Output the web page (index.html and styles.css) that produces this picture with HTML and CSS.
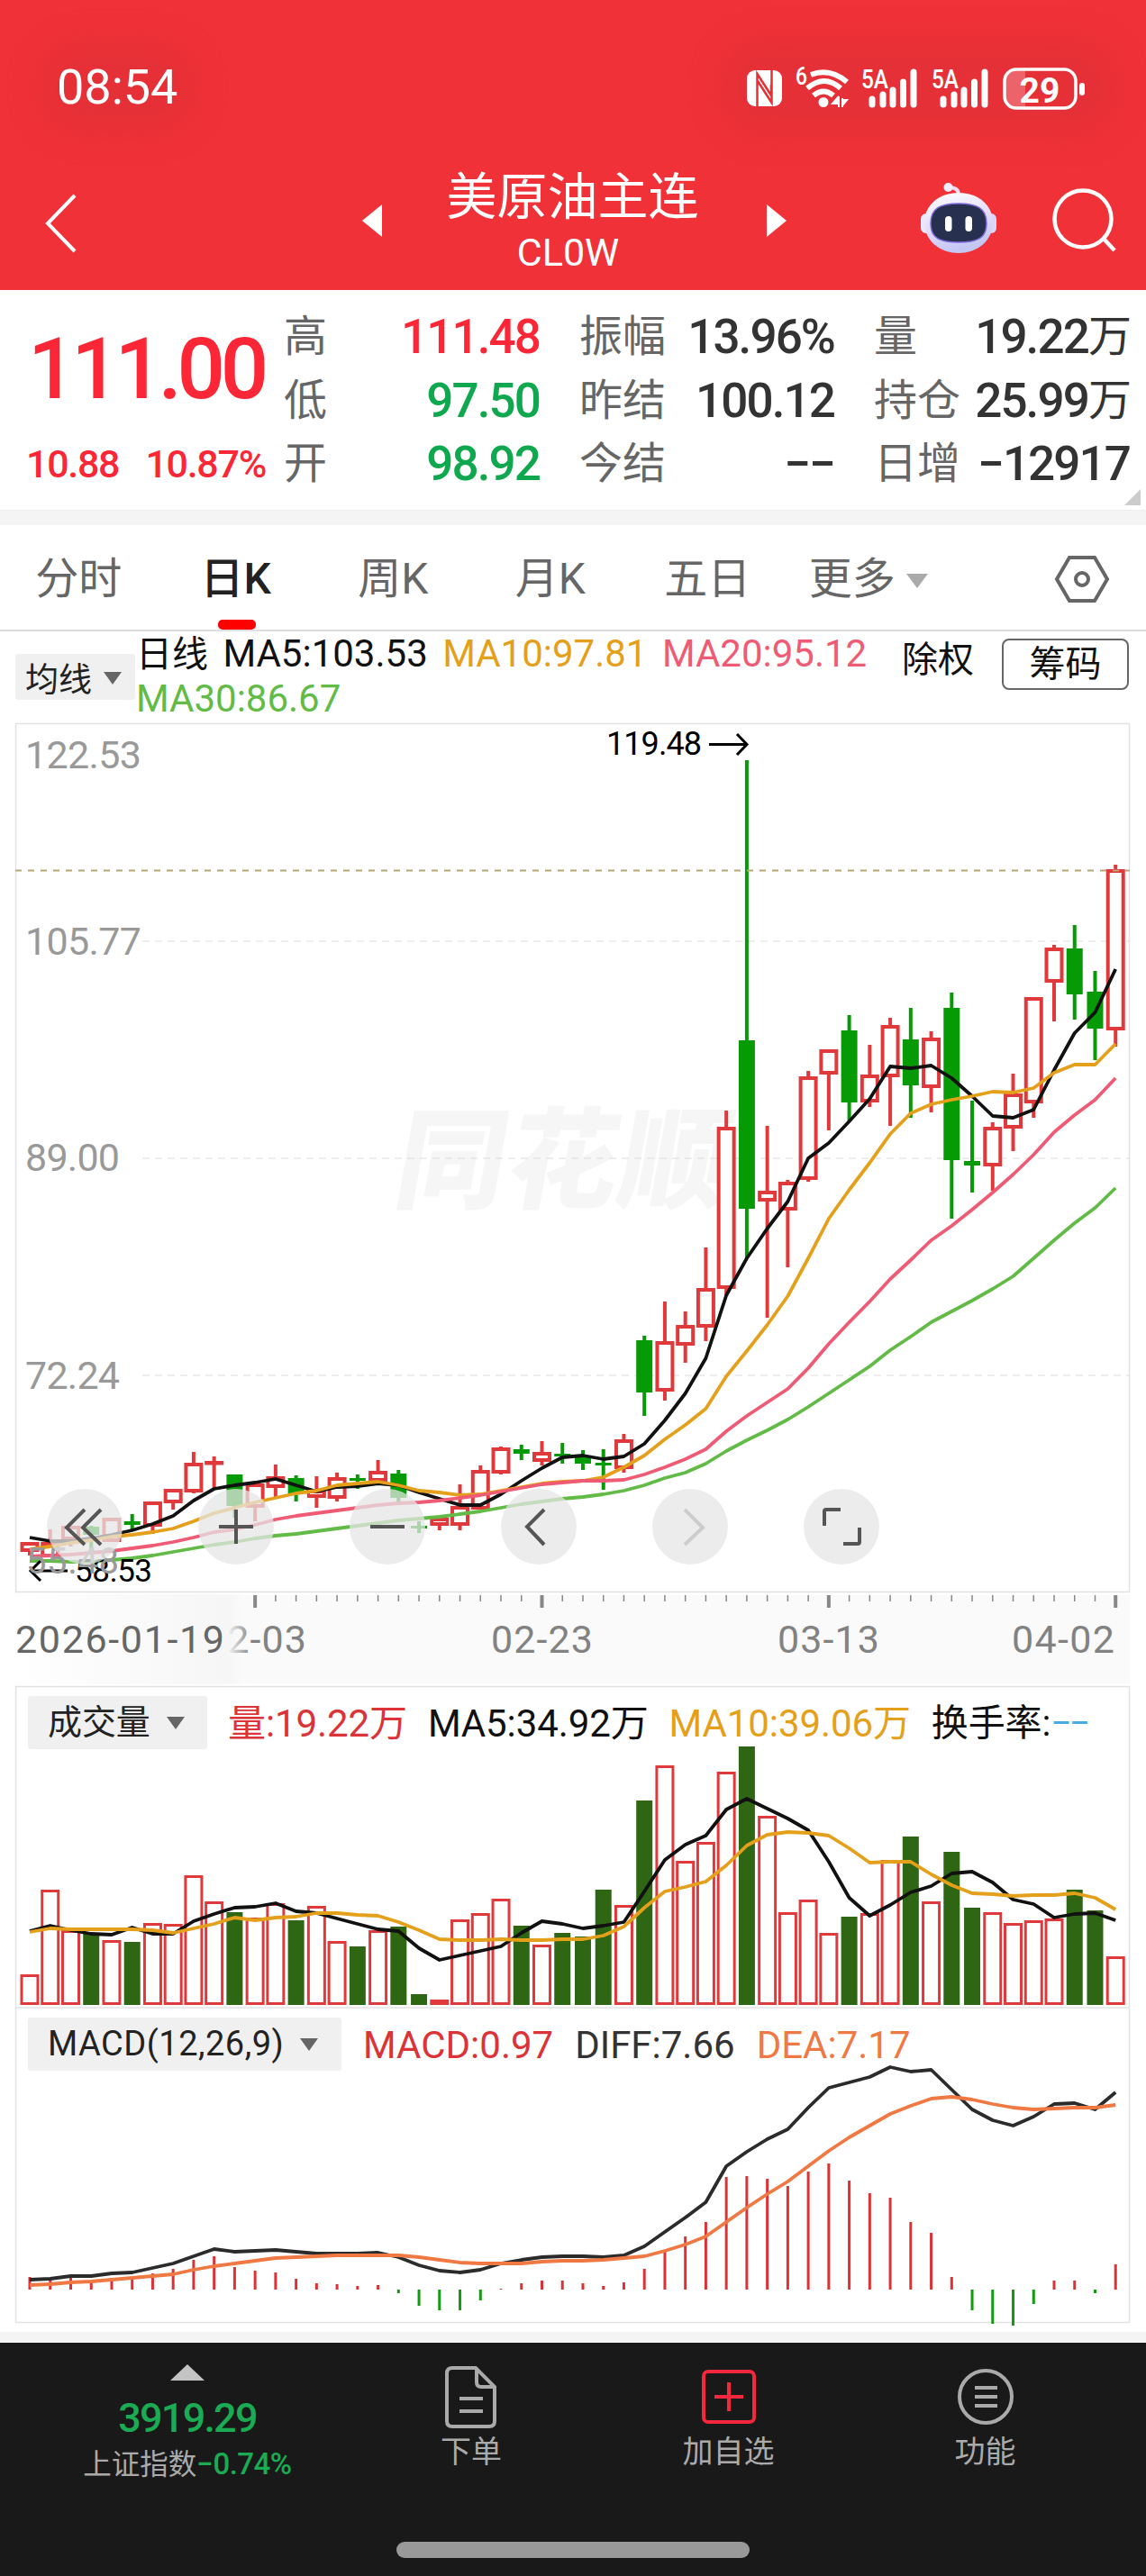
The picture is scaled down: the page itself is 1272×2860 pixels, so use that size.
FILE: index.html
```html
<!DOCTYPE html>
<html lang="zh-CN">
<head>
    <meta charset="UTF-8">
    <meta name="viewport" content="width=device-width, initial-scale=1.0">
    <title>美原油主连 CL0W</title>
    <link rel="stylesheet" href="styles.css">
</head>
<body>
    <header class="header">
        <div class="status-bar">
            <span class="clock">08:54</span>
            <svg class="status-icons" viewBox="820 64 400 66" width="400" height="66">
                <!-- nfc -->
                <rect x="829" y="78" width="39" height="40" rx="9" fill="#fff"/>
                <path d="M840.500 118V82L856 106V94M856.500 78V114L841 90" fill="none" stroke="#e53036" stroke-width="2.500"/>
                <!-- wifi -->
                <text x="883" y="94" font-size="28" class="st-text" textLength="13" lengthAdjust="spacingAndGlyphs">6</text>
                <g fill="none" stroke="#fff" stroke-width="6">
                    <path d="M900 83q21-8 40 8"/>
                    <path d="M896 98q19-16 37 0"/>
                    <path d="M903 106q11-9 22 0"/>
                </g>
                <circle cx="914" cy="113.500" r="5.500" fill="#fff"/>
                <path d="M931 107v12M931 107l-7 8h7M935 119v-10M935 111h5l-5 6" fill="#fff" stroke="#fff" stroke-width="2"/>
                <!-- signal -->
                <text x="956" y="98" font-size="29" class="st-text" textLength="30" lengthAdjust="spacingAndGlyphs">5A</text>
                <path d="M968 110v6M980 105v11M991 100v16M1002.500 91v25M1014 80v36" class="bars"/>
                <text x="1034" y="98" font-size="29" class="st-text" textLength="30" lengthAdjust="spacingAndGlyphs">5A</text>
                <path d="M1047 110v6M1059 105v11M1070 100v16M1081.500 91v25M1093 80v36" class="bars"/>
                <!-- battery -->
                <path d="M1138 78h-10q-12 0-12 12v18q0 12 12 12h10z" fill="#fff" opacity=".25"/>
                <rect x="1115" y="77" width="79" height="43" rx="13" fill="none" stroke="#fff" stroke-width="3.500"/>
                <rect x="1198" y="92" width="6" height="14" rx="3" fill="#fff"/>
                <text x="1154" y="113.500" font-size="39" font-weight="700" text-anchor="middle" fill="#fff">29</text>
            </svg>
        </div>
        <div class="title-bar">
            <svg class="back" width="44" height="72" viewBox="46 212 44 72"><path d="M83 217L53 248L83 279" fill="none" stroke="#fff" stroke-width="4"/></svg>
            <svg class="prev" width="22" height="36" viewBox="0 0 22 36"><path d="M22 0v36L0 18z" fill="#fff"/></svg>
            <div class="title">
                <h1>美原油主连</h1>
                <p>CL0W</p>
            </div>
            <svg class="next" width="22" height="36" viewBox="0 0 22 36"><path d="M0 0v36L22 18z" fill="#fff"/></svg>
            <svg class="robot" width="88" height="84" viewBox="1018 200 88 84">
                <defs>
                    <linearGradient id="shell" x1="0" y1="0" x2=".3" y2="1">
                        <stop offset="0" stop-color="#fff"/>
                        <stop offset=".6" stop-color="#e2dcfb"/>
                        <stop offset="1" stop-color="#c4c6f4"/>
                    </linearGradient>
                </defs>
                <path d="M1051 208q11 0 11 8" fill="none" stroke="#eedcf4" stroke-width="4"/>
                <circle cx="1050.500" cy="208" r="5" fill="#f3ebff"/>
                <rect x="1020" y="237" width="14" height="22" rx="6" fill="#ece8fb"/>
                <rect x="1090" y="237" width="14" height="22" rx="6" fill="#ddd6f8"/>
                <path d="M1062 214c22 0 38 14 38 33s-16 34-38 34-38-15-38-34 16-33 38-33z" fill="url(#shell)"/>
                <path d="M1062 226c20 0 31 5 31 22s-11 21-31 21-31-4-31-21 11-22 31-22z" fill="#27304f" stroke="#7d68d8" stroke-width="1.500"/>
                <rect x="1047" y="240" width="7.500" height="17" rx="3.700" fill="#fff"/>
                <rect x="1069.500" y="240" width="7.500" height="17" rx="3.700" fill="#fff"/>
            </svg>
            <svg class="search" width="76" height="76" viewBox="1164 206 76 76"><g fill="none" stroke="#fff" stroke-width="4.500"><circle cx="1200" cy="243" r="31.500"/><path d="M1222 264l13 14"/></g></svg>
        </div>
    </header>

    <section class="quote">
        <div class="price">
            <div class="last">111.00</div>
            <div class="change"><span>10.88</span><span>10.87%</span></div>
        </div>
        <dl class="stats">
            <dt>高</dt><dd class="up">111.48</dd>
            <dt>振幅</dt><dd>13.96%</dd>
            <dt>量</dt><dd>19.22<small>万</small></dd>
            <dt>低</dt><dd class="down">97.50</dd>
            <dt>昨结</dt><dd>100.12</dd>
            <dt>持仓</dt><dd>25.99<small>万</small></dd>
            <dt>开</dt><dd class="down">98.92</dd>
            <dt>今结</dt><dd>−−</dd>
            <dt>日增</dt><dd>−12917</dd>
        </dl>
        <i class="corner"></i>
    </section>

    <nav class="tabs">
        <a>分时</a>
        <a class="active">日K</a>
        <a>周K</a>
        <a>月K</a>
        <a>五日</a>
        <a>更多<i class="caret"></i></a>
        <svg class="settings" width="64" height="56" viewBox="0 0 64 56"><g fill="none" stroke="#666" stroke-width="4"><path d="M18 4h28L60 28L46 52H18L4 28z"/><circle cx="32" cy="28" r="7"/></g></svg>
    </nav>

    <div class="ma-bar">
        <span class="tag ma-tag">均线<i class="caret"></i></span>
        <p class="ma-legend"><span class="cjk">日线</span> <span>MA5:103.53</span> <span class="orange">MA10:97.81</span> <span class="pink">MA20:95.12</span> <span class="lime">MA30:86.67</span></p>
        <span class="exright">除权</span>
        <span class="chips">筹码</span>
    </div>

    <section class="panel kline">
        <svg id="kline" viewBox="0 803 1272 1069" width="1272" height="1069"></svg>
        <div class="controls">
            <button><svg viewBox="0 0 84 84"><path d="M42 23L22 43L42 62M60 23L40 43L60 62"/></svg></button>
            <button><svg viewBox="0 0 84 84"><path d="M23 42h38M42 23v38"/></svg></button>
            <button><svg viewBox="0 0 84 84"><path d="M23 42h38"/></svg></button>
            <button><svg viewBox="0 0 84 84"><path d="M48 23L29 42L48 62"/></svg></button>
            <button class="off"><svg viewBox="0 0 84 84"><path d="M36 23L56 43L36 62"/></svg></button>
            <button><svg viewBox="0 0 84 84"><path d="M23 41V25q0-2 2-2h16M44 61h16q2 0 2-2V43"/></svg></button>
        </div>
    </section>

    <section class="panel volume">
        <svg id="volume" viewBox="0 1872 1272 357" width="1272" height="357"></svg>
        <div class="legend">
            <span class="tag vol-tag">成交量<i class="caret"></i></span>
            <span class="red">量:19.22万</span>
            <span>MA5:34.92万</span>
            <span class="orange">MA10:39.06万</span>
            <span class="turnover">换手率:<span class="blue">−−</span></span>
        </div>
    </section>

    <section class="panel macd">
        <svg id="macd" viewBox="0 2229 1272 360" width="1272" height="360"></svg>
        <div class="legend">
            <span class="tag macd-tag">MACD(12,26,9)<i class="caret"></i></span>
            <span class="red">MACD:0.97</span>
            <span class="dark">DIFF:7.66</span>
            <span class="coral">DEA:7.17</span>
        </div>
    </section>

    <footer class="bottom">
        <div class="bottom-bar">
            <div class="index">
                <i class="arrow-up"></i>
                <strong>3919.29</strong>
                <p>上证指数<span>−0.74%</span></p>
            </div>
            <div class="item">
                <svg width="68" height="72" viewBox="0 0 68 72"><g fill="none" stroke="#aaa" stroke-width="4"><path d="M13 4h26l21 21v38q0 6-6 6H13q-6 0-6-6V10q0-6 6-6z"/><path d="M40 4v16q0 5 5 5h15M21 38h26M21 52h26"/></g></svg>
                <span>下单</span>
            </div>
            <div class="item">
                <svg width="68" height="72" viewBox="0 0 68 72"><g fill="none" stroke="#f5273d" stroke-width="4"><rect x="6" y="8" width="56" height="56" rx="5"/><path d="M18 36h32M34 20v32"/></g></svg>
                <span>加自选</span>
            </div>
            <div class="item">
                <svg width="68" height="72" viewBox="0 0 68 72"><g fill="none" stroke="#aaa" stroke-width="4"><circle cx="34" cy="36" r="29"/><path d="M22 26h25M22 36h25M22 46h25"/></g></svg>
                <span>功能</span>
            </div>
        </div>
        <div class="home"></div>
    </footer>
    <script src="chart.js"></script>
</body>
</html>
```

FILE: styles.css
```css
* {
    box-sizing: border-box;
}
body {
    margin: 0;
    width: 1272px;
    background: #fff;
    color: #111;
    font-family: Roboto, "Noto Sans CJK SC", sans-serif;
}
h1, p, dl, dd {
    margin: 0;
}
svg {
    display: block;
    flex: none;
}

/* header */
.header {
    height: 322px;
    background: #f03238;
    color: #fff;
}
.status-bar {
    display: flex;
    justify-content: space-between;
    align-items: center;
    height: 194px;
    padding: 0 52px 0 63px;
}
.clock {
    font-size: 54px;
    line-height: 60px;
    background: rgba(200, 44, 50, 0.25);
    box-shadow: 0 0 36px 20px rgba(200, 44, 50, 0.25);
    border-radius: 30px;
}
.status-icons {
    background: rgba(200, 44, 50, 0.25);
    box-shadow: 0 0 36px 20px rgba(200, 44, 50, 0.25);
    border-radius: 30px;
}
.st-text {
    fill: #fff;
    font-weight: 500;
}
.bars {
    stroke: #fff;
    stroke-width: 7;
    stroke-linecap: round;
}
.title-bar {
    display: flex;
    height: 128px;
}
.back {
    margin: 18px 312px 0 46px;
}
.prev, .next {
    margin-top: 33px;
}
.title {
    width: 427px;
    text-align: center;
}
.title h1 {
    margin: -7px 4px 0 0;
    font-size: 56px;
    line-height: 64px;
    font-weight: 400;
}
.title p {
    margin: -5px 14px 0 0;
    font-size: 43px;
    line-height: 68px;
}
.robot {
    margin: 6px 58px 0 147px;
}
.search {
    margin-top: 12px;
}

/* quote */
.quote {
    position: relative;
    display: flex;
    height: 245px;
    border-bottom: 1px solid #eee;
}
.price {
    width: 315px;
    color: #fb2737;
}
.last {
    margin-top: 34px;
    padding-left: 31px;
    font-size: 94px;
    line-height: 108px;
    font-weight: 500;
    letter-spacing: -5.2px;
}
.change {
    display: flex;
    justify-content: space-between;
    margin-top: 25px;
    padding: 0 20px 0 29px;
    font-size: 43px;
    line-height: 52px;
    font-weight: 500;
    letter-spacing: -1.3px;
}
.stats {
    display: grid;
    grid-template-columns: 100px 184px 147px 180px 144px 184px;
    grid-auto-rows: 70.5px;
    padding-top: 17px;
    line-height: 70px;
}
.stats dt {
    font-size: 48px;
    color: #666;
    white-space: nowrap;
}
.stats dd {
    display: flex;
    justify-content: flex-end;
    font-size: 53px;
    font-weight: 500;
    letter-spacing: -1.9px;
    color: #333;
    white-space: nowrap;
}
.stats dt:nth-of-type(3n + 2), .stats dt:nth-of-type(3n) {
    padding-left: 44px;
}
.stats small {
    font-size: 48px;
    font-weight: 400;
}
.stats .up {
    color: #fb2737;
}
.stats .down {
    color: #10a84e;
}
.corner {
    position: absolute;
    right: 6px;
    bottom: 5px;
    border-left: 18px solid transparent;
    border-bottom: 18px solid #ccc;
}

/* tabs */
.tabs {
    display: flex;
    height: 134px;
    border-top: 16px solid #f4f4f4;
    border-bottom: 2px solid #ddd;
}
.tabs a {
    position: relative;
    display: flex;
    justify-content: center;
    align-items: center;
    width: 174.5px;
    padding-top: 4px;
    font-size: 48px;
    line-height: 112px;
    color: #666;
}
.tabs .active {
    color: #222;
    font-weight: 500;
}
.tabs .active::after {
    content: "";
    position: absolute;
    left: 67px;
    bottom: 0;
    width: 42px;
    height: 11px;
    border-radius: 5px;
    background: #fe0000;
}
.caret {
    display: inline-block;
    border: 10px solid transparent;
    border-top: 14px solid #666;
    border-bottom: 0;
}
.tabs .caret {
    margin: 4px -8px 0 12px;
    border-width: 16px 12px 0;
    border-top-color: #aaa;
}
.settings {
    margin: 32px 0 0 122px;
}

/* moving average bar */
.ma-bar {
    display: flex;
    height: 102px;
}
.tag {
    display: flex;
    align-items: center;
    background: #f0f0f0;
    color: #222;
    border-radius: 3px;
}
.ma-tag {
    width: 133px;
    height: 51px;
    margin: 25px 1px 0 17px;
    padding-left: 11px;
    font-size: 37px;
}
.ma-tag .caret {
    margin: 3px 0 0 13px;
}
.ma-legend {
    width: 850px;
    font-size: 42px;
    line-height: 49px;
    word-spacing: 6px;
}
.ma-legend .cjk {
    font-size: 40px;
}
.exright {
    margin-top: 3px;
    font-size: 40px;
    line-height: 58px;
}
.chips {
    width: 141px;
    height: 57px;
    margin: 8px 0 0 31px;
    border: 2px solid #666;
    border-radius: 8px;
    text-align: center;
    font-size: 40px;
    line-height: 53px;
}
.orange {
    color: #e5a01b;
}
.pink {
    color: #ef5b75;
}
.lime {
    color: #62bb46;
}
.red {
    color: #db3338;
}
.dark {
    color: #333;
}
.coral {
    color: #f07843;
}
.blue {
    color: #4ba9e4;
    letter-spacing: -3px;
}

/* chart panels: legend stacked over the drawing */
.panel {
    display: grid;
}
.panel > * {
    grid-area: 1 / 1;
}
.panel svg {
    overflow: visible;
}
.controls {
    display: flex;
    gap: 84px;
    padding: 850px 0 0 52px;
    height: 934px;
}
.controls button {
    width: 84px;
    height: 84px;
    padding: 0;
    border: 0;
    border-radius: 50%;
    background: rgba(230, 230, 230, 0.75);
}
.controls path {
    fill: none;
    stroke: #555;
    stroke-width: 4;
}
.controls .off path {
    stroke: #ccc;
}
.legend {
    display: flex;
    gap: 24px;
    height: 70px;
    padding: 11px 0 0 31px;
    font-size: 42px;
    line-height: 61px;
    white-space: nowrap;
}
.volume .legend {
    gap: 23px;
    letter-spacing: -0.1px;
}
.legend .tag {
    height: 59px;
    padding-left: 22px;
    font-size: 38px;
}
.vol-tag {
    width: 199px;
}
.turnover {
    font-size: 41px;
}
.vol-tag .caret {
    margin: 0 0 0 18px;
}
.macd-tag {
    width: 348px;
    letter-spacing: 0.5px;
}
.macd-tag .caret {
    margin: 0 0 0 18px;
}

/* bottom bar */
.bottom {
    height: 271px;
    border-top: 12px solid #f4f4f4;
    background: #191919;
    color: #aaa;
}
.bottom-bar {
    display: flex;
    height: 221px;
}
.index {
    display: flex;
    flex-direction: column;
    align-items: center;
    width: 416px;
    padding-top: 24px;
}
.arrow-up {
    border: 19px solid transparent;
    border-top: 0;
    border-bottom: 18px solid #c4c4c4;
}
.index strong {
    margin-top: 14px;
    font-size: 45px;
    line-height: 56px;
    font-weight: 500;
    letter-spacing: -1.8px;
    color: #1aab53;
}
.index p {
    margin-top: 3px;
    font-size: 31.5px;
    line-height: 40px;
}
.index span {
    color: #1aab53;
    font-size: 33px;
    font-weight: 500;
    letter-spacing: -0.5px;
}
.item {
    display: flex;
    flex-direction: column;
    align-items: center;
    width: 286px;
    padding-top: 24px;
    font-size: 34px;
    line-height: 50px;
}
.item:nth-child(2) {
    width: 214px;
}
.item:nth-child(3) {
    width: 357px;
}
.item:nth-child(4) {
    width: 213px;
}
.home {
    width: 392px;
    height: 18px;
    margin: 0 auto;
    border-radius: 9px;
    background: #999;
}
```

FILE: chart.js
```js
var X0 = 33;
var STEP = 22.74;
var RED = '#e0393c';
var GREEN = '#069a06';

// [direction, high, body top, body bottom, low]
var candles = [
    [1, 1712, 1712, 1723, 1727], [1, 1698, 1712, 1729, 1729], [1, 1694, 1694, 1710, 1717], [0, 1694, 1695, 1704, 1720],
    [1, 1685, 1685, 1712, 1712], [0, 1681, 1689, 1693, 1698], [1, 1667, 1667, 1695, 1703], [1, 1653, 1653, 1669, 1676],
    [1, 1612, 1624, 1657, 1658], [1, 1617, 1622, 1626, 1653], [0, 1637, 1637, 1672, 1685], [1, 1647, 1647, 1674, 1689],
    [1, 1626, 1639, 1652, 1662], [0, 1638, 1641, 1658, 1667], [1, 1639, 1654, 1663, 1674], [1, 1635, 1640, 1664, 1667],
    [0, 1637, 1641, 1644, 1653], [1, 1621, 1633, 1645, 1646], [0, 1632, 1636, 1663, 1671], [0, 1689, 1694, 1697, 1702],
    [1, 1685, 1685, 1694, 1699], [1, 1648, 1672, 1694, 1699], [1, 1627, 1632, 1676, 1676], [1, 1606, 1607, 1636, 1637],
    [0, 1604, 1609, 1614, 1621], [1, 1600, 1612, 1623, 1627], [0, 1602, 1614, 1617, 1625], [0, 1610, 1617, 1625, 1632],
    [0, 1609, 1624, 1627, 1654], [1, 1592, 1598, 1631, 1635], [0, 1483, 1488, 1546, 1572], [1, 1445, 1489, 1545, 1555],
    [1, 1456, 1471, 1494, 1513], [1, 1385, 1430, 1474, 1489], [1, 1233, 1251, 1431, 1439], [0, 844, 1155, 1342, 1397],
    [1, 1250, 1322, 1334, 1463], [1, 1310, 1312, 1344, 1407], [1, 1189, 1195, 1310, 1312], [1, 1165, 1165, 1193, 1255],
    [0, 1127, 1144, 1224, 1245], [1, 1160, 1193, 1224, 1229], [1, 1130, 1138, 1196, 1250], [0, 1119, 1154, 1205, 1241],
    [1, 1145, 1152, 1208, 1235], [0, 1102, 1119, 1288, 1353], [0, 1222, 1289, 1294, 1324], [1, 1246, 1251, 1295, 1322],
    [1, 1192, 1214, 1253, 1278], [1, 1107, 1107, 1225, 1241], [1, 1049, 1052, 1091, 1134], [0, 1027, 1053, 1104, 1132],
    [0, 1078, 1101, 1142, 1177], [1, 960, 965, 1144, 1162]
];
var ma5 = [1707, 1711, 1711, 1708, 1704, 1699, 1692, 1683, 1666, 1653, 1649, 1646, 1642, 1649, 1656, 1651, 1650, 1647, 1649, 1657, 1664, 1671, 1671, 1659, 1644, 1630, 1618, 1616, 1620, 1617, 1603, 1577, 1547, 1508, 1438, 1397, 1364, 1334, 1286, 1269, 1245, 1220, 1184, 1186, 1183, 1197, 1217, 1239, 1241, 1232, 1188, 1147, 1124, 1076];
var ma10 = [1720, 1717, 1713, 1710, 1706, 1704, 1701, 1697, 1689, 1680, 1674, 1668, 1663, 1658, 1655, 1649, 1647, 1645, 1649, 1655, 1657, 1660, 1659, 1655, 1651, 1647, 1645, 1644, 1640, 1629, 1616, 1598, 1582, 1564, 1528, 1500, 1471, 1439, 1397, 1353, 1321, 1291, 1259, 1236, 1226, 1221, 1217, 1212, 1213, 1208, 1191, 1182, 1182, 1159];
var ma20 = [1728, 1727, 1726, 1724, 1722, 1719, 1716, 1712, 1707, 1701, 1698, 1693, 1687, 1683, 1680, 1677, 1674, 1671, 1669, 1668, 1666, 1663, 1660, 1656, 1652, 1648, 1646, 1644, 1644, 1643, 1637, 1629, 1620, 1609, 1589, 1572, 1557, 1542, 1519, 1492, 1468, 1445, 1420, 1399, 1377, 1361, 1343, 1324, 1304, 1282, 1257, 1238, 1221, 1197];
var ma30 = [1733, 1733, 1734, 1734, 1732, 1730, 1727, 1723, 1719, 1715, 1712, 1708, 1705, 1703, 1700, 1697, 1694, 1691, 1688, 1686, 1684, 1681, 1678, 1674, 1670, 1667, 1664, 1662, 1659, 1655, 1649, 1641, 1635, 1625, 1611, 1599, 1588, 1576, 1562, 1547, 1532, 1517, 1499, 1484, 1468, 1456, 1444, 1431, 1417, 1397, 1377, 1358, 1341, 1319];

var volTop = [2192, 2098, 2143, 2147, 2154, 2156, 2135, 2136, 2082, 2111, 2123, 2129, 2113, 2132, 2116, 2155, 2161, 2143, 2139, 2214, 2220, 2131, 2124, 2108, 2138, 2159, 2146, 2150, 2098, 2115, 1999, 1960, 2066, 2045, 1967, 1939, 2016, 2123, 2109, 2146, 2128, 2124, 2065, 2039, 2111, 2056, 2118, 2123, 2135, 2132, 2130, 2098, 2121, 2172];
var volDown = [3, 5, 10, 13, 16, 18, 19, 24, 26, 27, 28, 30, 35, 40, 43, 45, 46, 51, 52];
var vma5 = [2144, 2138, 2143, 2147, 2148, 2140, 2147, 2147, 2133, 2125, 2118, 2117, 2113, 2122, 2124, 2130, 2136, 2142, 2144, 2163, 2176, 2171, 2166, 2161, 2146, 2133, 2136, 2141, 2138, 2134, 2100, 2065, 2048, 2038, 2009, 1997, 2008, 2019, 2032, 2067, 2107, 2127, 2115, 2101, 2094, 2080, 2078, 2090, 2109, 2114, 2129, 2125, 2124, 2132];
var vma10 = [2145, 2141, 2142, 2142, 2142, 2142, 2143, 2146, 2141, 2136, 2129, 2132, 2129, 2128, 2124, 2124, 2126, 2127, 2134, 2143, 2153, 2154, 2154, 2153, 2154, 2154, 2153, 2153, 2149, 2139, 2118, 2100, 2095, 2089, 2071, 2049, 2037, 2034, 2035, 2038, 2052, 2068, 2067, 2067, 2081, 2093, 2102, 2103, 2105, 2104, 2104, 2102, 2107, 2120];

var macd = [2528, 2530, 2528, 2532, 2529, 2529, 2524, 2519, 2509, 2505, 2517, 2521, 2523, 2530, 2535, 2536, 2538, 2537, 2546, 2560, 2565, 2565, 2554, 2541, 2535, 2532, 2532, 2535, 2538, 2534, 2519, 2499, 2483, 2467, 2417, 2416, 2419, 2427, 2411, 2402, 2421, 2435, 2440, 2467, 2479, 2528, 2565, 2580, 2582, 2558, 2532, 2532, 2546, 2514];
var diff = [2531, 2530, 2527, 2527, 2524, 2523, 2518, 2513, 2505, 2497, 2500, 2499, 2498, 2500, 2502, 2502, 2502, 2501, 2506, 2515, 2521, 2523, 2520, 2513, 2509, 2506, 2505, 2505, 2506, 2504, 2494, 2478, 2462, 2445, 2405, 2389, 2375, 2364, 2340, 2318, 2312, 2306, 2295, 2300, 2298, 2320, 2342, 2354, 2360, 2350, 2336, 2335, 2342, 2323];
var dea = [2537, 2536, 2534, 2533, 2531, 2529, 2527, 2525, 2520, 2516, 2513, 2510, 2507, 2506, 2505, 2504, 2504, 2504, 2504, 2506, 2509, 2512, 2513, 2513, 2513, 2511, 2510, 2510, 2509, 2507, 2505, 2499, 2492, 2483, 2467, 2451, 2436, 2422, 2405, 2388, 2373, 2360, 2347, 2338, 2330, 2328, 2331, 2336, 2340, 2342, 2341, 2340, 2340, 2337];

function x(i) {
    return X0 + i * STEP;
}

function rect(cx, top, bottom, up, green, sw) {
    if (up) {
        var h = Math.max(bottom - top - sw, 0.5);
        return '<rect x="' + (cx - 10.5 + sw / 2) + '" y="' + (top + sw / 2) + '" width="' + (21 - sw) + '" height="' + h + '" fill="#fff" stroke="' + RED + '" stroke-width="' + sw + '"/>';
    }
    return '<rect x="' + (cx - 9) + '" y="' + top + '" width="18" height="' + (bottom - top) + '" fill="' + green + '"/>';
}

function vline(cx, y1, y2, color, w) {
    return '<path d="M' + cx + ' ' + y1 + 'V' + y2 + '" stroke="' + color + '" stroke-width="' + w + '"/>';
}

function hline(y, x1, x2, color, extra) {
    return '<path d="M' + x1 + ' ' + y + 'H' + x2 + '" stroke="' + color + '" ' + (extra || '') + '/>';
}

function line(values, color) {
    var pts = values.map(function (v, i) { return x(i).toFixed(1) + ',' + v; }).join(' ');
    return '<polyline points="' + pts + '" fill="none" stroke="' + color + '" stroke-width="3.8" stroke-linejoin="round"/>';
}

function text(s, tx, y, size, color, len) {
    return '<text x="' + tx + '" y="' + y + '" font-size="' + size + '" fill="' + color + '" textLength="' + len + '">' + s + '</text>';
}

function drawKline() {
    var out = '';
    // watermark
    out += '<text transform="translate(434 1332) skewX(-10)" font-size="122" font-weight="900" fill="#f6f6f6" textLength="370">同花顺</text>';
    // frame and grid
    out += '<rect x="17.5" y="803.5" width="1236" height="964" fill="none" stroke="#e2e2e2" stroke-width="1.5"/>';
    [1045, 1286, 1527].forEach(function (y) {
        out += hline(y, 158, 1254, '#dcdcdc', 'stroke-dasharray="8 6"');
    });
    candles.forEach(function (c, i) {
        var color = c[0] ? RED : GREEN;
        out += vline(x(i), c[1], c[4], color, 4);
        out += rect(x(i), c[2], c[3], c[0], GREEN, 4);
    });
    out += line(ma5, '#111') + line(ma10, '#e5a01b') + line(ma20, '#ef5b75') + line(ma30, '#62bb46');
    out += hline(966.5, 17, 1254, '#b9a66f', 'stroke-width="2" stroke-dasharray="7 7"');
    // scale
    out += text('122.53', 28, 853, 43, '#999', 129);
    out += text('105.77', 28, 1060, 43, '#999', 129);
    out += text('89.00', 28, 1300, 43, '#999', 105);
    out += text('72.24', 28, 1542, 43, '#999', 105);
    out += text('58.53', 83, 1756, 35, '#000', 86);
    out += '<path d="M34 1744H75M45 1733L34 1744L45 1755" fill="none" stroke="#000" stroke-width="3"/>';
    out += text('55.48', 29, 1747, 40, '#999', 103);
    out += text('119.48', 673, 838, 36, '#000', 106);
    out += '<path d="M787 826.5H829M818 815L829 826.5L818 838" fill="none" stroke="#000" stroke-width="3"/>';
    // date axis
    out += '<rect x="17" y="1771" width="1237" height="98" fill="#fafafa"/>';
    for (var i = 11; i < 54; i++) {
        var major = (i - 11) % 14 === 0;
        out += vline(x(i), 1771, major ? 1785 : 1778, '#888', major ? 4 : 1.5);
    }
    out += text('02-03', 227, 1835, 43, '#828282', 113);
    out += text('02-23', 545, 1835, 43, '#828282', 113);
    out += text('03-13', 863, 1835, 43, '#828282', 113);
    out += text('04-02', 1123, 1835, 43, '#828282', 114);
    out += '<defs><linearGradient id="fade"><stop offset="0" stop-color="#fff"/><stop offset=".9" stop-color="#f6f6f6"/><stop offset="1" stop-color="#fafafa" stop-opacity="0"/></linearGradient></defs>';
    out += '<rect x="17" y="1770" width="262" height="100" fill="url(#fade)"/>';
    out += text('2026-01-19', 17, 1835, 43, '#666', 232);
    document.getElementById('kline').innerHTML = out;
}

function drawVolume() {
    var out = '<rect x="17.5" y="1872.5" width="1236" height="356.5" fill="none" stroke="#e2e2e2" stroke-width="1.5"/>';
    volTop.forEach(function (top, i) {
        out += rect(x(i), top, 2226, volDown.indexOf(i) < 0, '#2e6613', 3);
    });
    out += line(vma5, '#111') + line(vma10, '#e5a01b');
    document.getElementById('volume').innerHTML = out;
}

function drawMacd() {
    var out = '<path d="M17.5 2230V2578.5H1253.5V2230" fill="none" stroke="#e2e2e2" stroke-width="1.5"/>';
    macd.forEach(function (v, i) {
        out += vline(x(i), v, 2542, v > 2542 ? '#149a14' : '#dc3236', 3);
    });
    out += line(diff, '#2b2b2b') + line(dea, '#f07843');
    document.getElementById('macd').innerHTML = out;
}

drawKline();
drawVolume();
drawMacd();
```
